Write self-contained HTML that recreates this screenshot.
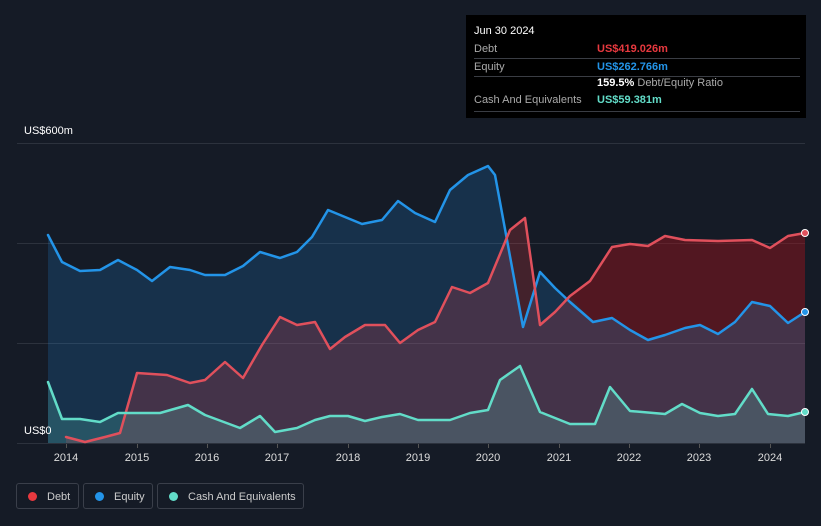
<!DOCTYPE html>
<html><head><style>
body{margin:0;width:821px;height:526px;background:#151b26;font-family:"Liberation Sans",sans-serif;position:relative;overflow:hidden}
.t{position:absolute;color:#fff;font-size:11px}
.tip{position:absolute;left:466px;top:15px;width:340px;height:103px;background:#000}
.row{position:absolute;left:8px;width:326px;border-bottom:1px solid #3a3d44;font-size:11px;color:#aaa}
.row b{font-weight:bold}
.leg{position:absolute;top:483px;height:26px;border:1px solid #3a3f4a;border-radius:3px;color:#ccc;font-size:11px;line-height:26px;box-sizing:border-box}
.dot{display:inline-block;width:9px;height:9px;border-radius:50%;margin:0 10px 0 11px;vertical-align:-1px}
</style></head><body>
<svg width="821" height="526" style="position:absolute;left:0;top:0">
<g stroke="#2c323d" stroke-width="1"><line x1="17" y1="143.5" x2="805" y2="143.5"/><line x1="17" y1="243.5" x2="805" y2="243.5"/><line x1="17" y1="343.5" x2="805" y2="343.5"/><line x1="17" y1="443.5" x2="805" y2="443.5"/></g>
<polygon fill="rgba(33,150,243,0.18)" points="48,443 48,235 62,262 80,271 100,270 118,260 137,270 152,281 170,267 190,270 205,275 225,275 243,266 260,252 280,258 297,252 312,237 328,210 345,217 362,224 382,220 398,201 415,213 435,222 450,190 468,175 488,166 495,175 507,240 523,327 540,272 555,288 570,302 593,322 612,318 630,330 648,340 665,335 685,328 700,325 718,334 735,322 752,302 770,306 788,323 805,312 805,443"/>
<polygon fill="rgba(230,60,70,0.22)" points="66,443 66,437 85,442 105,437 120,433 137,373 167,375 190,383 205,380 225,362 243,378 262,345 280,317 297,325 315,322 330,349 345,337 365,325 385,325 400,343 418,330 435,322 452,287 470,293 488,283 510,230 525,218 540,325 555,312 570,296 590,281 612,247 630,244 648,246 665,236 685,240 718,241 752,240 770,248 788,236 805,233 805,443"/>
<polygon fill="rgba(120,0,10,0.3)" points="570,296 590,281 612,247 630,244 648,246 665,236 685,240 718,241 752,240 770,248 788,236 805,233 805,312 788,323 770,306 752,302 735,322 718,334 700,325 685,328 665,335 648,340 630,330 612,318 593,322"/>
<polygon fill="rgba(100,220,200,0.2)" points="48,443 48,382 62,419 80,419 100,422 118,413 160,413 188,405 205,415 240,428 260,416 275,432 297,428 315,420 330,416 348,416 365,421 382,417 400,414 418,420 450,420 470,413 488,410 500,380 520,366 540,412 570,424 595,424 610,387 630,411 665,414 682,404 700,413 718,416 735,414 752,389 768,414 788,416 805,412 805,443"/>
<g fill="none" stroke-width="2.5" stroke-linejoin="round" stroke-linecap="round">
<polyline stroke="#2394e8" points="48,235 62,262 80,271 100,270 118,260 137,270 152,281 170,267 190,270 205,275 225,275 243,266 260,252 280,258 297,252 312,237 328,210 345,217 362,224 382,220 398,201 415,213 435,222 450,190 468,175 488,166 495,175 507,240 523,327 540,272 555,288 570,302 593,322 612,318 630,330 648,340 665,335 685,328 700,325 718,334 735,322 752,302 770,306 788,323 805,312"/>
<polyline stroke="#e0505c" points="66,437 85,442 105,437 120,433 137,373 167,375 190,383 205,380 225,362 243,378 262,345 280,317 297,325 315,322 330,349 345,337 365,325 385,325 400,343 418,330 435,322 452,287 470,293 488,283 510,230 525,218 540,325 555,312 570,296 590,281 612,247 630,244 648,246 665,236 685,240 718,241 752,240 770,248 788,236 805,233"/>
<polyline stroke="#62dcc8" points="48,382 62,419 80,419 100,422 118,413 160,413 188,405 205,415 240,428 260,416 275,432 297,428 315,420 330,416 348,416 365,421 382,417 400,414 418,420 450,420 470,413 488,410 500,380 520,366 540,412 570,424 595,424 610,387 630,411 665,414 682,404 700,413 718,416 735,414 752,389 768,414 788,416 805,412"/>
</g>
<circle cx="805" cy="233" r="3.5" fill="#e0505c" stroke="#fff"/>
<circle cx="805" cy="312" r="3.5" fill="#2394e8" stroke="#fff"/>
<circle cx="805" cy="412" r="3.5" fill="#62dcc8" stroke="#fff"/>
<g stroke="#555" ><line x1="66.5" y1="444" x2="66.5" y2="448"/><line x1="137.5" y1="444" x2="137.5" y2="448"/><line x1="207.5" y1="444" x2="207.5" y2="448"/><line x1="277.5" y1="444" x2="277.5" y2="448"/><line x1="348.5" y1="444" x2="348.5" y2="448"/><line x1="418.5" y1="444" x2="418.5" y2="448"/><line x1="488.5" y1="444" x2="488.5" y2="448"/><line x1="559.5" y1="444" x2="559.5" y2="448"/><line x1="629.5" y1="444" x2="629.5" y2="448"/><line x1="699.5" y1="444" x2="699.5" y2="448"/><line x1="770.5" y1="444" x2="770.5" y2="448"/></g>
<g fill="#ddd" font-size="11" font-family="Liberation Sans,sans-serif" text-anchor="middle"><text x="66" y="461">2014</text><text x="137" y="461">2015</text><text x="207" y="461">2016</text><text x="277" y="461">2017</text><text x="348" y="461">2018</text><text x="418" y="461">2019</text><text x="488" y="461">2020</text><text x="559" y="461">2021</text><text x="629" y="461">2022</text><text x="699" y="461">2023</text><text x="770" y="461">2024</text></g>
</svg>
<div class="t" style="left:24px;top:125px">US$600m</div>
<div class="t" style="left:24px;top:425px">US$0</div>
<div class="tip">
<div class="t" style="left:8px;top:10px;font-size:11px">Jun 30 2024</div>
<div class="row" style="top:26px;height:17px"><span style="position:absolute;top:2px">Debt</span><b style="position:absolute;left:123px;top:2px;color:#e8393f">US$419.026m</b></div>
<div class="row" style="top:44px;height:17px"><span style="position:absolute;top:2px">Equity</span><b style="position:absolute;left:123px;top:2px;color:#2394e8">US$262.766m</b></div>
<div class="row" style="top:62px;height:17px;border:none"><span style="position:absolute;left:123px;top:0px"><b style="color:#fff">159.5%</b> Debt/Equity Ratio</span></div>
<div class="row" style="top:79px;height:17px"><span style="position:absolute;top:0px">Cash And Equivalents</span><b style="position:absolute;left:123px;top:0px;color:#62dcc8">US$59.381m</b></div>
</div>
<div class="leg" style="left:16px;width:63px"><span class="dot" style="background:#e8393f"></span>Debt</div>
<div class="leg" style="left:83px;width:70px"><span class="dot" style="background:#2394e8"></span>Equity</div>
<div class="leg" style="left:157px;width:147px"><span class="dot" style="background:#62dcc8"></span>Cash And Equivalents</div>
</body></html>
